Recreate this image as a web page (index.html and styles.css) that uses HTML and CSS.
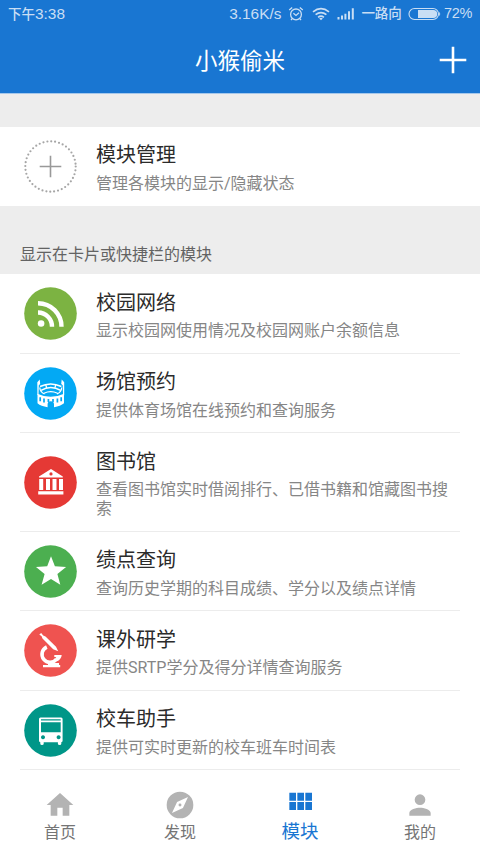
FILE: index.html
```html
<!DOCTYPE html>
<html lang="zh-CN">
<head>
<meta charset="utf-8">
<title>小猴偷米</title>
<link rel="stylesheet" href="styles.css">
</head>
<body>
<div class="app">
  <header class="header">
    <div class="status">
      <span class="time"><span class="cjk">下午</span>3:38</span>
      <span class="speed">3.16K/s</span>
      <svg class="alarm" width="16" height="16" viewBox="0 0 16 16" fill="none" stroke="currentColor" stroke-width="1.3"><circle cx="8" cy="8.4" r="5.4"/><path d="M1.2 4 4.2 1.4M14.8 4 11.8 1.4M5.4 7.2 8 9.4 11 6.8M4.2 12.6 3 14M11.8 12.6 13 14"/></svg>
      <svg class="wifi" width="18" height="14" viewBox="0 0 18 14" fill="none" stroke="currentColor" stroke-width="1.7"><path d="M1 4.8Q9-1.5 17 4.8M3.6 7.7Q9 3.4 14.4 7.7M6.1 10.3Q9 8 11.9 10.3"/><path d="M7.2 11.4Q9 10 10.8 11.4L9 13.3Z" fill="currentColor" stroke="none"/></svg>
      <svg class="signal" width="18" height="12" viewBox="0 0 18 12" fill="currentColor"><path d="M.5 9h2v2.5h-2zM4 7.5h2v4H4zM7.4 5.7h2v5.8h-2zM11 3.2h2v8.3h-2zM14.8.3h2v11.2h-2z"/></svg>
      <span class="carrier">一路向</span>
      <svg class="battery" width="33" height="14" viewBox="0 0 33 14"><rect x="1" y="1.5" width="29.5" height="11" rx="5.5" fill="none" stroke="currentColor" stroke-width="1.1"/><path d="M10 3h15.2a4 4 0 0 1 0 8H10z" fill="currentColor"/><path d="M31.2 5v4q1-.7 1-2t-1-2z" fill="currentColor"/></svg>
      <span class="percent">72%</span>
    </div>
    <div class="bar">
      <h1 class="title">小猴偷米</h1>
      <svg class="add" width="28" height="28" viewBox="0 0 28 28"><path d="M14 .7v26.6M.7 14h26.6" stroke="#fff" stroke-width="2.6"/></svg>
    </div>
  </header>

  <main class="content">
    <section class="manage row">
      <svg class="icon" viewBox="0 0 53 53"><circle cx="26.5" cy="26.5" r="25.2" fill="none" stroke="#a6a6a6" stroke-width="2.2" stroke-linecap="round" stroke-dasharray="0 3.958"/><path d="M26.5 15.7v21.6M15.7 26.5h21.6" stroke="#999" stroke-width="1.6"/></svg>
      <div class="text"><h2>模块管理</h2><p>管理各模块的显示/隐藏状态</p></div>
    </section>
    <h3 class="section-title">显示在卡片或快捷栏的模块</h3>
    <section class="list">
      <div class="row item">
        <svg class="icon" viewBox="0 0 53 53"><circle cx="26.5" cy="26.5" r="26.3" fill="#7cb342"/><circle cx="17.1" cy="36.5" r="3.3" fill="#fff"/><path d="M14 25.5A14 14 0 0 1 28 39.8M14 16.2A23.5 23.5 0 0 1 37.5 39.8" fill="none" stroke="#fff" stroke-width="4.4"/></svg>
        <div class="text"><h2>校园网络</h2><p>显示校园网使用情况及校园网账户余额信息</p></div>
      </div>
      <div class="row item">
        <svg class="icon" viewBox="0 0 53 53"><circle cx="26.5" cy="26.5" r="26.3" fill="#03a9f4"/><g fill="#fff"><path d="M13.5 26.7Q26.5 33 40 26.7V36.3Q36.5 39.3 30 40.2V37.5a3.2 3.2 0 0 0-6.4 0v2.7Q17 39.4 13.5 36.3Z"/><path d="M13.3 15.2 15.7 12.6 16.2 17 14.8 18.2 14.5 27.5 13.4 28.2ZM40.2 15.2 37.7 12.6 37.2 17 38.7 18.2 39 27.5 40.2 28.2Z"/></g><g fill="none" stroke="#fff"><path d="M16 19.5Q26.7 14.3 37.4 19.5M17 23.3Q26.7 17.7 36.7 23.3" stroke-width="1.5"/><path d="M15.8 20.5Q16 25 20.5 27M37.7 20.5Q37.5 25 33 27M20 26.2Q26.7 23.2 33.5 26.2M21.7 17.8l1 3.2M31.8 17.8l-1 3.2" stroke-width="1.2"/></g><path d="M16.2 30.2v4M20 31.5v4M24.4 32v3M29 32v3M33.4 31.5v4M37.2 30.2v4" stroke="#03a9f4" stroke-width="1.7"/></svg>
        <div class="text"><h2>场馆预约</h2><p>提供体育场馆在线预约和查询服务</p></div>
      </div>
      <div class="row item">
        <svg class="icon" viewBox="0 0 53 53"><circle cx="26.5" cy="26.5" r="26.3" fill="#e53935"/><path d="M27 13 38.8 20.5v1H15v-1ZM15.2 23h4v11h-4zM22 23h4v11h-4zM28.5 23h4v11h-4zM35 23h4v11h-4zM14.2 35.3h25.2v3.3H14.2z" fill="#fff"/><circle cx="27" cy="17.9" r="1.6" fill="#e53935"/></svg>
        <div class="text"><h2>图书馆</h2><p>查看图书馆实时借阅排行、已借书籍和馆藏图书搜索</p></div>
      </div>
      <div class="row item">
        <svg class="icon" viewBox="0 0 53 53"><circle cx="26.5" cy="26.5" r="26.3" fill="#4caf50"/><path d="M27 11.2 30.9 21.2 42.1 22.1 33.4 29.1 36.3 39.7 27 34.1 17.6 39.7 20.6 29.1 12 22.1 23.2 21.2Z" fill="#fff"/></svg>
        <div class="text"><h2>绩点查询</h2><p>查询历史学期的科目成绩、学分以及绩点详情</p></div>
      </div>
      <div class="row item">
        <svg class="icon" viewBox="0 0 53 53"><circle cx="26.5" cy="26.5" r="26.3" fill="#ef5350"/><path d="M17.2 9 19.2 11.4 21.5 12.5 32 22.8 34.2 27.2 29.2 25.3 18.5 14.5 17.6 12.3 15.3 10.6Z" fill="#fff"/><path d="M22.8 23A8 8 0 1 0 32.5 35" fill="none" stroke="#fff" stroke-width="3.6"/><path d="M30.3 31H37.7Q37.3 35 33.5 37.3L31.3 34.2 32.300 33H30.3ZM24 39h11v2.200H24zM19 41.100h17.200v2.200H19z" fill="#fff"/></svg>
        <div class="text"><h2>课外研学</h2><p>提供SRTP学分及得分详情查询服务</p></div>
      </div>
      <div class="row item">
        <svg class="icon" viewBox="0 0 53 53"><circle cx="26.5" cy="26.5" r="26.3" fill="#009688"/><path fill="#fff" fill-rule="evenodd" d="M16.5 13.5h20.6q1.5 0 1.5 1.5v21.8q0 1.4-1.3 1.4v1.5q0 1.4-1.7 1.4t-1.7-1.4v-1.5H19.7v1.5q0 1.4-1.7 1.4t-1.7-1.4v-1.5q-1.3 0-1.3-1.4V15q0-1.5 1.5-1.5zM17 15.2v1.3h19.7v-1.3zM17 18.3v10h19.7v-10zM19 31.3a2 2 0 1 0 .01 0zM34.6 31.3a2 2 0 1 0 .01 0z"/></svg>
        <div class="text"><h2>校车助手</h2><p>提供可实时更新的校车班车时间表</p></div>
      </div>
    </section>
  </main>

  <nav class="tabs">
    <div class="tab"><svg width="32" height="32" viewBox="0 0 24 24"><path d="M10 20v-6h4v6h5v-8h3L12 3 2 12h3v8z"/></svg><span>首页</span></div>
    <div class="tab"><svg width="32" height="32" viewBox="0 0 24 24"><path d="M12 10.9a1.1 1.1 0 1 0 0 2.2 1.1 1.1 0 0 0 0-2.2zM12 2a10 10 0 1 0 0 20 10 10 0 0 0 0-20zm2.2 12.2L6 18l3.8-8.2L18 6z"/></svg><span>发现</span></div>
    <div class="tab active"><svg width="32" height="32" viewBox="0 0 24 24"><path d="M4 11h5V5H4v6zm0 7h5v-6H4v6zm6 0h5v-6h-5v6zm6 0h5v-6h-5v6zm-6-7h5V5h-5v6zm6-6v6h5V5h-5z"/></svg><span>模块</span></div>
    <div class="tab"><svg width="32" height="32" viewBox="0 0 24 24"><path d="M12 12a4 4 0 1 0 0-8 4 4 0 0 0 0 8zm0 2c-2.7 0-8 1.3-8 4v2h16v-2c0-2.7-5.3-4-8-4z"/></svg><span>我的</span></div>
  </nav>
</div>
</body>
</html>
```
FILE: styles.css
```css
* { box-sizing: border-box; }
body {
  margin: 0;
  background: #fff;
  font-family: Roboto, "Noto Sans CJK SC", sans-serif;
}
h1, h2, h3, p { margin: 0; font-weight: 400; }
svg { display: block; flex: none; }

.app {
  width: 480px;
  height: 853px;
  display: flex;
  flex-direction: column;
  overflow: hidden;
}

.header {
  height: 94px;
  flex: none;
  background: #1976d2;
  border-bottom: 1px solid #a6c8eb;
}
.status {
  height: 27px;
  display: flex;
  align-items: center;
  padding: 0 8px;
  color: #c9def4;
  font: 15.4px/27px "Liberation Sans", "Noto Sans CJK SC", sans-serif;
  white-space: nowrap;
}
.cjk, .carrier { font-size: 13.5px; font-weight: 500; }
.time { margin-right: auto; }
.speed { margin-right: 7px; }
.alarm { margin-right: 8px; }
.wifi { margin-right: 7px; }
.signal { margin-right: 6px; }
.carrier { margin-right: 6px; }
.battery { margin-right: 3px; }
.percent { font-size: 14.5px; letter-spacing: -0.3px; }

.bar {
  height: 66px;
  display: grid;
  grid-template-columns: 1fr auto 1fr;
  align-items: center;
  padding: 0 13px;
}
.title {
  grid-column: 2;
  color: #fff;
  font-size: 22.5px;
  line-height: 32px;
  padding-top: 2px;
}
.add { justify-self: end; }

.content {
  flex: none;
  background: #ededed;
  padding-top: 33px;
}
.row {
  display: flex;
  align-items: center;
  padding: 14px 4px 12.5px;
}
.manage { height: 79px; padding: 13px 24px; background: #fff; }
.icon { width: 53px; height: 53px; margin: -5.5px 19px -4.5px 0; }
.text { flex: 1; min-width: 0; }
.text h2 {
  color: #2b2b2b;
  font-size: 20px;
  line-height: 28px;
  margin-bottom: 5px;
}
.item .text h2 { padding-top: 0.5px; margin-bottom: 4.5px; }
.text p {
  color: #868686;
  font-size: 16px;
  line-height: 19px;
}
.section-title {
  height: 68px;
  padding: 37px 20px 0;
  color: #636363;
  font-size: 16px;
  line-height: 24px;
}
.list { background: #fff; padding: 0 20px; }
.item { border-bottom: 1px solid #ececec; }

.tabs {
  flex: 1;
  display: grid;
  grid-template-columns: repeat(4, 1fr);
  padding-top: 19px;
  background: #fff;
}
.tab {
  display: flex;
  flex-direction: column;
  align-items: center;
  color: #757575;
  font-size: 16px;
  line-height: 22px;
}
.tab svg { fill: #b3b3b3; margin-bottom: 1px; }
.active { color: #1976d2; font-size: 18.5px; }
.active svg { fill: #1976d2; margin-top: -3px; margin-bottom: 3px; }
```
